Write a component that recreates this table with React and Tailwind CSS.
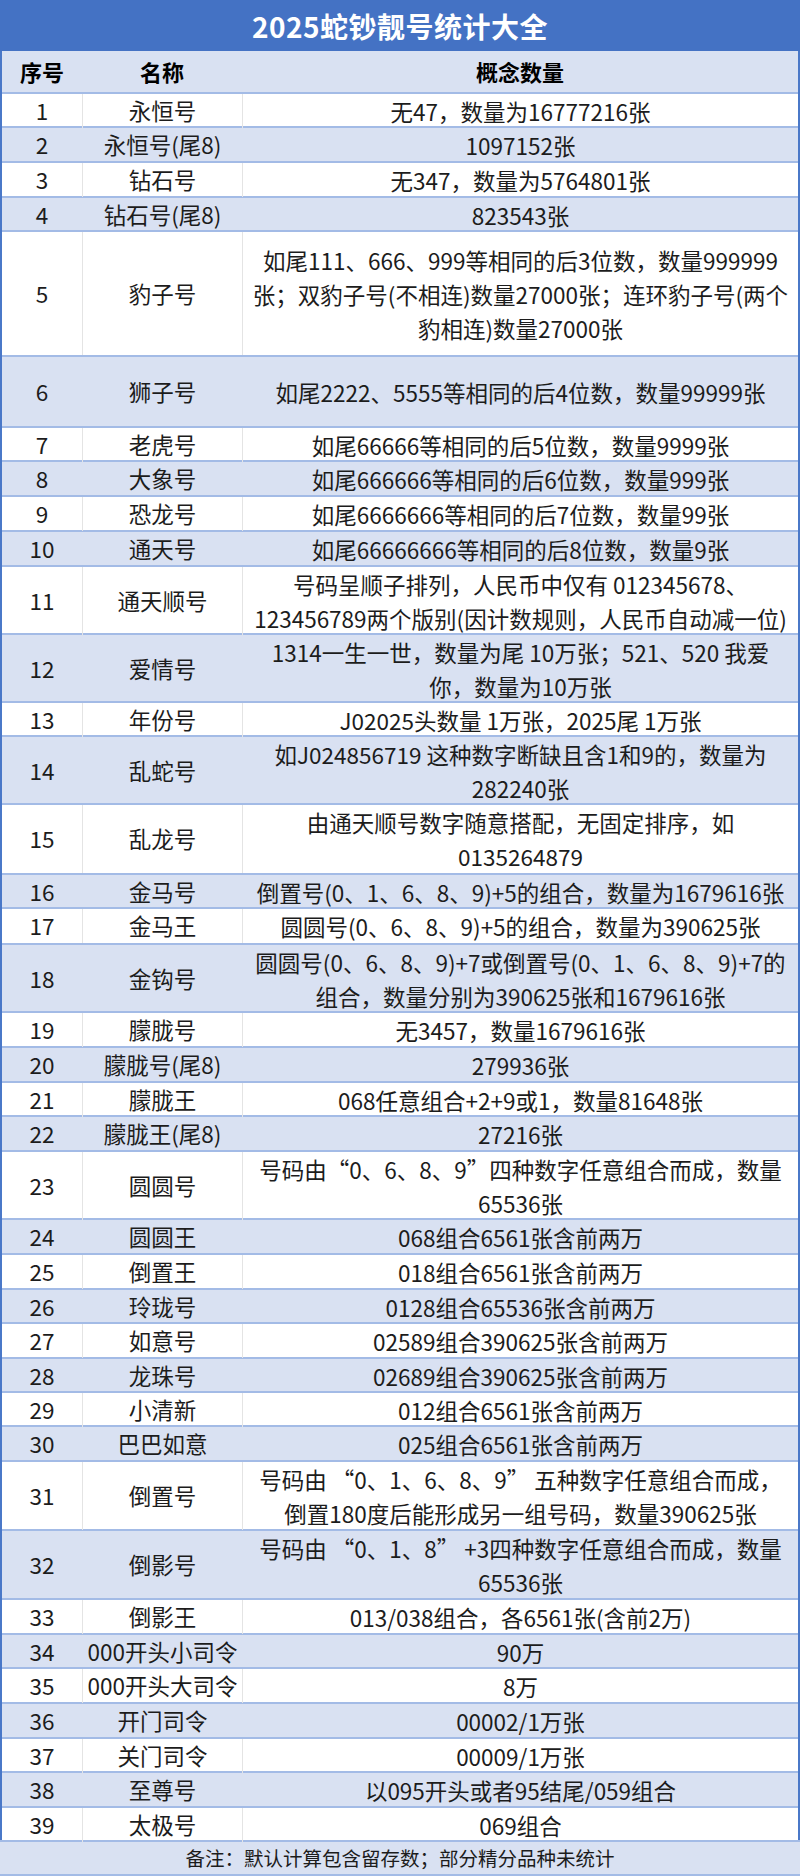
const rows = [
  { n: '1', name: '永恒号', text: ['无47，数量为16777216张'], h: 'h-[34px]' },
  { n: '2', name: '永恒号(尾8)', text: ['1097152张'], h: 'h-[35px]' },
  { n: '3', name: '钻石号', text: ['无347，数量为5764801张'], h: 'h-[35px]' },
  { n: '4', name: '钻石号(尾8)', text: ['823543张'], h: 'h-[34px]' },
  {
    n: '5',
    name: '豹子号',
    text: ['如尾111、666、999等相同的后3位数，数量999999', '张；双豹子号(不相连)数量27000张；连环豹子号(两个', '豹相连)数量27000张'],
    h: 'h-[125px]',
  },
  { n: '6', name: '狮子号', text: ['如尾2222、5555等相同的后4位数，数量99999张'], h: 'h-[71px]' },
  { n: '7', name: '老虎号', text: ['如尾66666等相同的后5位数，数量9999张'], h: 'h-[34px]' },
  { n: '8', name: '大象号', text: ['如尾666666等相同的后6位数，数量999张'], h: 'h-[35px]' },
  { n: '9', name: '恐龙号', text: ['如尾6666666等相同的后7位数，数量99张'], h: 'h-[35px]' },
  { n: '10', name: '通天号', text: ['如尾66666666等相同的后8位数，数量9张'], h: 'h-[35px]' },
  { n: '11', name: '通天顺号', text: ['号码呈顺子排列，人民币中仅有 012345678、', '123456789两个版别(因计数规则，人民币自动减一位)'], h: 'h-[68px]' },
  { n: '12', name: '爱情号', text: ['1314一生一世，数量为尾 10万张；521、520 我爱', '你，数量为10万张'], h: 'h-[68px]' },
  { n: '13', name: '年份号', text: ['J02025头数量 1万张，2025尾 1万张'], h: 'h-[34px]' },
  { n: '14', name: '乱蛇号', text: ['如J024856719 这种数字断缺且含1和9的，数量为', '282240张'], h: 'h-[68px]' },
  { n: '15', name: '乱龙号', text: ['由通天顺号数字随意搭配，无固定排序，如', '0135264879'], h: 'h-[70px]' },
  { n: '16', name: '金马号', text: ['倒置号(0、1、6、8、9)+5的组合，数量为1679616张'], h: 'h-[34px]' },
  { n: '17', name: '金马王', text: ['圆圆号(0、6、8、9)+5的组合，数量为390625张'], h: 'h-[36px]' },
  { n: '18', name: '金钩号', text: ['圆圆号(0、6、8、9)+7或倒置号(0、1、6、8、9)+7的', '组合，数量分别为390625张和1679616张'], h: 'h-[68px]' },
  { n: '19', name: '朦胧号', text: ['无3457，数量1679616张'], h: 'h-[35px]' },
  { n: '20', name: '朦胧号(尾8)', text: ['279936张'], h: 'h-[35px]' },
  { n: '21', name: '朦胧王', text: ['068任意组合+2+9或1，数量81648张'], h: 'h-[34px]' },
  { n: '22', name: '朦胧王(尾8)', text: ['27216张'], h: 'h-[35px]' },
  { n: '23', name: '圆圆号', text: ['号码由“0、6、8、9”四种数字任意组合而成，数量', '65536张'], h: 'h-[68px]' },
  { n: '24', name: '圆圆王', text: ['068组合6561张含前两万'], h: 'h-[35px]' },
  { n: '25', name: '倒置王', text: ['018组合6561张含前两万'], h: 'h-[35px]' },
  { n: '26', name: '玲珑号', text: ['0128组合65536张含前两万'], h: 'h-[34px]' },
  { n: '27', name: '如意号', text: ['02589组合390625张含前两万'], h: 'h-[35px]' },
  { n: '28', name: '龙珠号', text: ['02689组合390625张含前两万'], h: 'h-[34px]' },
  { n: '29', name: '小清新', text: ['012组合6561张含前两万'], h: 'h-[34px]' },
  { n: '30', name: '巴巴如意', text: ['025组合6561张含前两万'], h: 'h-[35px]' },
  { n: '31', name: '倒置号', text: ['号码由 “0、1、6、8、9” 五种数字任意组合而成，', '倒置180度后能形成另一组号码，数量390625张'], h: 'h-[69px]' },
  { n: '32', name: '倒影号', text: ['号码由 “0、1、8” +3四种数字任意组合而成，数量', '65536张'], h: 'h-[69px]' },
  { n: '33', name: '倒影王', text: ['013/038组合，各6561张(含前2万)'], h: 'h-[35px]' },
  { n: '34', name: '000开头小司令', text: ['90万'], h: 'h-[34px]' },
  { n: '35', name: '000开头大司令', text: ['8万'], h: 'h-[35px]' },
  { n: '36', name: '开门司令', text: ['00002/1万张'], h: 'h-[35px]' },
  { n: '37', name: '关门司令', text: ['00009/1万张'], h: 'h-[34px]' },
  { n: '38', name: '至尊号', text: ['以095开头或者95结尾/059组合'], h: 'h-[35px]' },
  { n: '39', name: '太极号', text: ['069组合'], h: 'h-[34px]' },
];

export default function App() {
  return (
    <div
      className="w-[800px] h-[1876px] bg-white text-[#1c1c1c] overflow-hidden"
      style={{ fontFamily: '"Noto Sans CJK SC", "Noto Sans", sans-serif' }}
    >
      {/* title bar */}
      <div className="h-[51px] bg-[#4472c4] flex items-center justify-center">
        <h1 className="text-[28px] font-bold text-white tracking-[0.5px]">2025蛇钞靓号统计大全</h1>
      </div>

      <div className="border-x-2 border-[#4a78c8]">
        {/* header */}
        <div className="h-[41px] bg-[#d9e1f2] grid grid-cols-[80px_160px_1fr] items-center text-[22px] font-bold text-black">
          <div className="text-center">序号</div>
          <div className="text-center">名称</div>
          <div className="text-center">概念数量</div>
        </div>

        {rows.map((r, i) => {
          const blue = i % 2 === 1;
          return (
            <div
              key={r.n}
              className={`${r.h} grid grid-cols-[80px_160px_1fr] border-t-2 border-[#a3bbe6] text-[22.5px] ${
                blue ? 'bg-[#d9e1f2]' : 'bg-white'
              }`}
            >
              <div className="flex items-center justify-center">{r.n}</div>
              <div
                className={`flex items-center justify-center whitespace-nowrap border-l ${
                  blue ? 'border-transparent' : 'border-[#e4e4e4]'
                }`}
              >
                {r.name}
              </div>
              <div
                className={`flex flex-col items-center justify-center leading-[34px] whitespace-nowrap border-l ${
                  blue ? 'border-transparent' : 'border-[#e4e4e4]'
                }`}
              >
                {r.text.map(t => (
                  <div key={t}>{t}</div>
                ))}
              </div>
            </div>
          );
        })}
      </div>

      {/* footer note */}
      <div className="h-[36px] bg-[#d9e1f2] border-y-2 border-[#a3bbe6] flex items-center justify-center text-[19.5px]">
        备注：默认计算包含留存数；部分精分品种未统计
      </div>
    </div>
  );
}
